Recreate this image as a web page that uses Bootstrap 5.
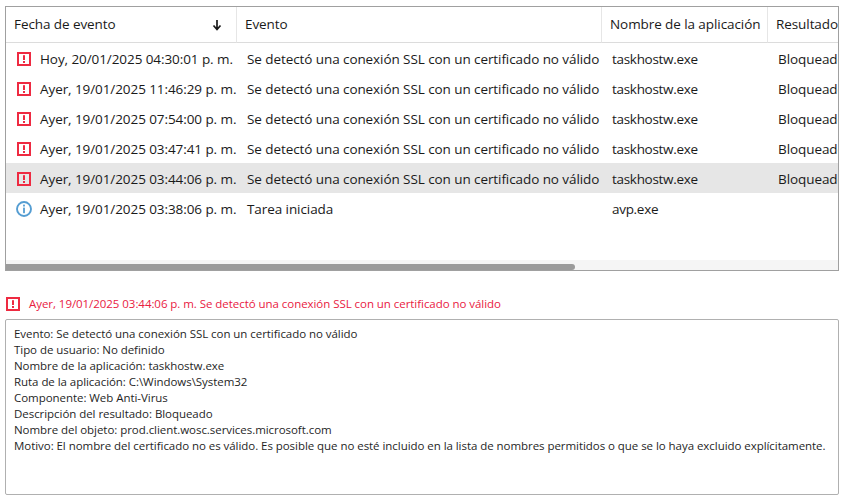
<!doctype html>
<html lang="es"><head><meta charset="utf-8"><title>Eventos</title>
<link href="https://cdn.jsdelivr.net/npm/bootstrap@5.3.0/dist/css/bootstrap.min.css" rel="stylesheet">
<style>
html,body{height:503px;overflow:hidden;background:#fff}
body{font-family:"Open Sans","Noto Sans",sans-serif;color:#1a1a1a;padding:6px 6px 0 5px}
.grid-box{width:834px;height:265px;border:1px solid #a0a0a0;overflow:hidden;flex-direction:column}
.grid-body{flex:1 1 auto;overflow:hidden;min-height:0}
.ev-table{table-layout:fixed;width:900px;margin:0;font-size:13.5px;letter-spacing:-.08px;border-collapse:separate;border-spacing:0;--bs-table-bg:transparent;--bs-table-color:#1a1a1a}
.ev-table th,.ev-table td{padding:0;border:0;white-space:nowrap;overflow:hidden;vertical-align:middle}
.ev-table th{height:36px;font-weight:400;border-bottom:1px solid #dcdcdc;border-right:1px solid #e6e6e6;padding-left:8px}
.ev-table td{height:30px;padding:2px 0 0 10px}
.ev-table td:first-child{padding-left:11px}
.ev-table td:nth-child(3){letter-spacing:-.3px}
.ev-table tr.sel td{background:#e6e6e6}
.ev-table th.sort-cell{padding-right:14px}
.cell-date{gap:9px}
.ico{width:14px;height:14px;flex:none;display:block}
.ico-i{width:16px;height:16px;margin:0 -1px}
.track{height:10px;background:#f5f5f5;flex:none;align-items:flex-end}
.thumb{width:569px;height:6px;background:#9b9b9b;border-radius:0 3px 3px 0}
.sum{margin:24px 0 6px;height:18px;color:#e9203f;font-size:11.5px;letter-spacing:-.05px;gap:9px;padding-left:1px;width:834px}
.detail{width:834px;height:176px;border:1px solid #b0b0b0;border-radius:2px;padding:6px 8px;font-size:11.5px;line-height:16px;letter-spacing:-.05px;color:#1f1f1f;white-space:nowrap;overflow:hidden}
</style></head>
<body>
<div class="grid-box d-flex">
 <div class="grid-body">
 <table class="table ev-table">
  <colgroup><col style="width:231px"><col style="width:365px"><col style="width:166px"><col style="width:138px"></colgroup>
  <thead><tr>
   <th class="sort-cell"><div class="d-flex justify-content-between align-items-center"><span>Fecha de evento</span><svg width="10" height="12" viewBox="0 0 10 12"><path d="M5 1v9M1.5 6.5 5 10.5l3.5-4" fill="none" stroke="#1a1a1a" stroke-width="1.7"/></svg></div></th>
   <th>Evento</th><th>Nombre de la aplicación</th><th>Resultado</th>
  </tr></thead>
  <tbody>
   <tr><td><div class="d-flex align-items-center cell-date"><svg class="ico" viewBox="0 0 14 14"><rect x="1" y="1" width="12" height="12" fill="none" stroke="#ee2a41" stroke-width="2"/><rect x="6" y="3.2" width="2" height="4.8" fill="#ee2a41"/><rect x="6" y="9" width="2" height="2" fill="#ee2a41"/></svg><span>Hoy, 20/01/2025 04:30:01 p. m.</span></div></td><td>Se detectó una conexión SSL con un certificado no válido</td><td>taskhostw.exe</td><td>Bloqueado</td></tr>
   <tr><td><div class="d-flex align-items-center cell-date"><svg class="ico" viewBox="0 0 14 14"><rect x="1" y="1" width="12" height="12" fill="none" stroke="#ee2a41" stroke-width="2"/><rect x="6" y="3.2" width="2" height="4.8" fill="#ee2a41"/><rect x="6" y="9" width="2" height="2" fill="#ee2a41"/></svg><span>Ayer, 19/01/2025 11:46:29 p. m.</span></div></td><td>Se detectó una conexión SSL con un certificado no válido</td><td>taskhostw.exe</td><td>Bloqueado</td></tr>
   <tr><td><div class="d-flex align-items-center cell-date"><svg class="ico" viewBox="0 0 14 14"><rect x="1" y="1" width="12" height="12" fill="none" stroke="#ee2a41" stroke-width="2"/><rect x="6" y="3.2" width="2" height="4.8" fill="#ee2a41"/><rect x="6" y="9" width="2" height="2" fill="#ee2a41"/></svg><span>Ayer, 19/01/2025 07:54:00 p. m.</span></div></td><td>Se detectó una conexión SSL con un certificado no válido</td><td>taskhostw.exe</td><td>Bloqueado</td></tr>
   <tr><td><div class="d-flex align-items-center cell-date"><svg class="ico" viewBox="0 0 14 14"><rect x="1" y="1" width="12" height="12" fill="none" stroke="#ee2a41" stroke-width="2"/><rect x="6" y="3.2" width="2" height="4.8" fill="#ee2a41"/><rect x="6" y="9" width="2" height="2" fill="#ee2a41"/></svg><span>Ayer, 19/01/2025 03:47:41 p. m.</span></div></td><td>Se detectó una conexión SSL con un certificado no válido</td><td>taskhostw.exe</td><td>Bloqueado</td></tr>
   <tr class="sel"><td><div class="d-flex align-items-center cell-date"><svg class="ico" viewBox="0 0 14 14"><rect x="1" y="1" width="12" height="12" fill="none" stroke="#ee2a41" stroke-width="2"/><rect x="6" y="3.2" width="2" height="4.8" fill="#ee2a41"/><rect x="6" y="9" width="2" height="2" fill="#ee2a41"/></svg><span>Ayer, 19/01/2025 03:44:06 p. m.</span></div></td><td>Se detectó una conexión SSL con un certificado no válido</td><td>taskhostw.exe</td><td>Bloqueado</td></tr>
   <tr><td><div class="d-flex align-items-center cell-date"><svg class="ico ico-i" viewBox="0 0 16 16"><circle cx="8" cy="8" r="7" fill="none" stroke="#549dd2" stroke-width="1.9"/><rect x="7.1" y="3.6" width="1.8" height="1.9" fill="#549dd2"/><rect x="7.1" y="6.6" width="1.8" height="5.6" fill="#549dd2"/></svg><span>Ayer, 19/01/2025 03:38:06 p. m.</span></div></td><td>Tarea iniciada</td><td>avp.exe</td><td></td></tr>
  </tbody>
 </table>
 </div>
 <div class="track d-flex"><div class="thumb"></div></div>
</div>
<div class="sum d-flex align-items-center"><svg class="ico" viewBox="0 0 14 14"><rect x="1" y="1" width="12" height="12" fill="none" stroke="#ee2a41" stroke-width="2"/><rect x="6" y="3.2" width="2" height="4.8" fill="#ee2a41"/><rect x="6" y="9" width="2" height="2" fill="#ee2a41"/></svg><span>Ayer, 19/01/2025 03:44:06 p. m. Se detectó una conexión SSL con un certificado no válido</span></div>
<div class="detail">Evento: Se detectó una conexión SSL con un certificado no válido<br>Tipo de usuario: No definido<br>Nombre de la aplicación: taskhostw.exe<br>Ruta de la aplicación: C:\Windows\System32<br>Componente: Web Anti-Virus<br>Descripción del resultado: Bloqueado<br>Nombre del objeto: prod.client.wosc.services.microsoft.com<br>Motivo: El nombre del certificado no es válido. Es posible que no esté incluido en la lista de nombres permitidos o que se lo haya excluido explícitamente.</div>
<script src="https://cdn.jsdelivr.net/npm/bootstrap@5.3.0/dist/js/bootstrap.bundle.min.js"></script>
</body></html>
